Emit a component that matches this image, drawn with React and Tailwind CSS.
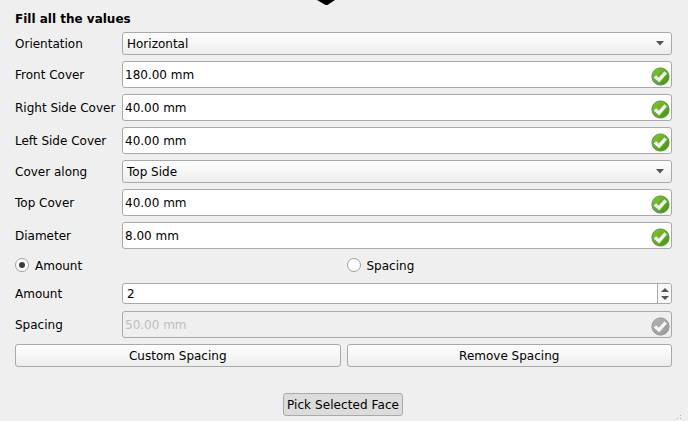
import React from 'react';

function CheckIcon({ disabled }) {
  const id = disabled ? 'check-off' : 'check-on';
  return (
    <svg width="20" height="20" viewBox="0 0 20 20" className="shrink-0">
      <defs>
        <linearGradient id={id} x1="0" y1="0" x2="1" y2="1">
          <stop offset="0" stopColor={disabled ? '#b4b4b4' : '#84d022'} />
          <stop offset="1" stopColor={disabled ? '#9a9a9a' : '#3a920c'} />
        </linearGradient>
      </defs>
      <circle cx="10.5" cy="10.5" r="8.6" fill={`url(#${id})`} stroke={disabled ? '#959595' : '#5a9150'} strokeWidth="1" />
      <path
        d="M3.3 11.6 L6.1 8.7 L8.8 11.2 L14.4 4.9 L17.3 7.6 L9.2 16.8 Z"
        fill={disabled ? '#f5f5f5' : '#f4f5f1'}
        stroke={disabled ? '#8c8c8c' : '#5c9a3a'}
        strokeWidth="0.5"
      />
    </svg>
  );
}

function Row({ label, children }) {
  return (
    <div className="flex items-center">
      <label className="w-[107px] shrink-0 whitespace-nowrap">{label}</label>
      {children}
    </div>
  );
}

function Combo({ label, value }) {
  return (
    <Row label={label}>
      <div className="flex h-[23px] flex-1 items-center justify-between rounded-[3px] border border-[#a9a9a9] bg-linear-to-b from-[#fefefe] to-[#ededed] pr-[7px] pl-1">
        <span>{value}</span>
        <svg width="8" height="5" viewBox="0 0 8 5"><path d="M0 0H8L4 4.6Z" fill="#555" /></svg>
      </div>
    </Row>
  );
}

function Field({ label, value, disabled }) {
  return (
    <Row label={label}>
      <div className={`flex h-[27px] flex-1 items-center justify-between rounded-[3px] border border-[#a9a9a9] pr-px pl-0.5 ${disabled ? 'bg-[#efefef] text-[#bebebe]' : 'bg-white'}`}>
        <span>{value}</span>
        <span className="pt-[3px]"><CheckIcon disabled={disabled} /></span>
      </div>
    </Row>
  );
}

function Radio({ label, checked }) {
  return (
    <div className="flex flex-1 items-center gap-1.5">
      <span className="mb-0.5 flex size-3.5 items-center justify-center rounded-full border border-[#a0a0a0] bg-white">
        {checked && <span className="size-1.5 rounded-full bg-[#3c3c3c]" />}
      </span>
      <span>{label}</span>
    </div>
  );
}

function PushButton({ children }) {
  return (
    <button className="h-[23px] flex-1 rounded-[3px] border border-[#a9a9a9] bg-linear-to-b from-[#fefefe] to-[#ededed]">
      {children}
    </button>
  );
}

export default function App() {
  return (
    <div className="flex h-[421px] w-[688px] flex-col overflow-hidden bg-[#efefef] font-['DejaVu_Sans',sans-serif] text-[12px] leading-[14px] text-black">
      <svg width="18" height="5" viewBox="0 0 18 5" className="ml-[317px] shrink-0">
        <path d="M0 0H18L10.5 4.9H8.5Z" fill="#000" />
      </svg>
      <div className="mt-[7px] flex flex-col gap-1.5 pr-4 pl-[15px]">
        <h1 className="h-3.5 font-bold">Fill all the values</h1>
        <Combo label="Orientation" value="Horizontal" />
        <Field label="Front Cover" value="180.00 mm" />
        <Field label="Right Side Cover" value="40.00 mm" />
        <Field label="Left Side Cover" value="40.00 mm" />
        <Combo label="Cover along" value="Top Side" />
        <Field label="Top Cover" value="40.00 mm" />
        <Field label="Diameter" value="8.00 mm" />
        <div className="flex h-[22px] items-center gap-1.5">
          <Radio label="Amount" checked />
          <Radio label="Spacing" />
        </div>
        <div className="pb-px">
          <Row label="Amount">
            <div className="flex h-[21px] flex-1 items-center rounded-[3px] border border-[#a9a9a9] bg-white pl-1">
              <span className="flex-1">2</span>
              <span className="flex h-full w-[14px] flex-col items-center justify-center gap-1 rounded-r-[2px] border-l border-[#a9a9a9] bg-[#f7f7f7]">
                <svg width="8" height="4" viewBox="0 0 8 4"><path d="M0 4H8L4 0Z" fill="#555" /></svg>
                <svg width="8" height="4" viewBox="0 0 8 4"><path d="M0 0H8L4 4Z" fill="#555" /></svg>
              </span>
            </div>
          </Row>
        </div>
        <Field label="Spacing" value="50.00 mm" disabled />
        <div className="flex gap-1.5">
          <PushButton>Custom Spacing</PushButton>
          <PushButton>Remove Spacing</PushButton>
        </div>
      </div>
      <button className="mt-[26px] ml-[283px] h-[23px] w-[120px] shrink-0 rounded-[3px] border border-[#a9a9a9] bg-[#dcdcdc] tracking-[0.08px] whitespace-nowrap">
        Pick Selected Face
      </button>
      <svg width="5" height="5" viewBox="0 0 5 5" className="-mt-[1px] ml-[677px] shrink-0" shapeRendering="crispEdges">
        <path d="M3 0h1v1H3zM0 3h1v1H0zM3 3h1v1H3z" fill="#aaa" />
      </svg>
    </div>
  );
}
